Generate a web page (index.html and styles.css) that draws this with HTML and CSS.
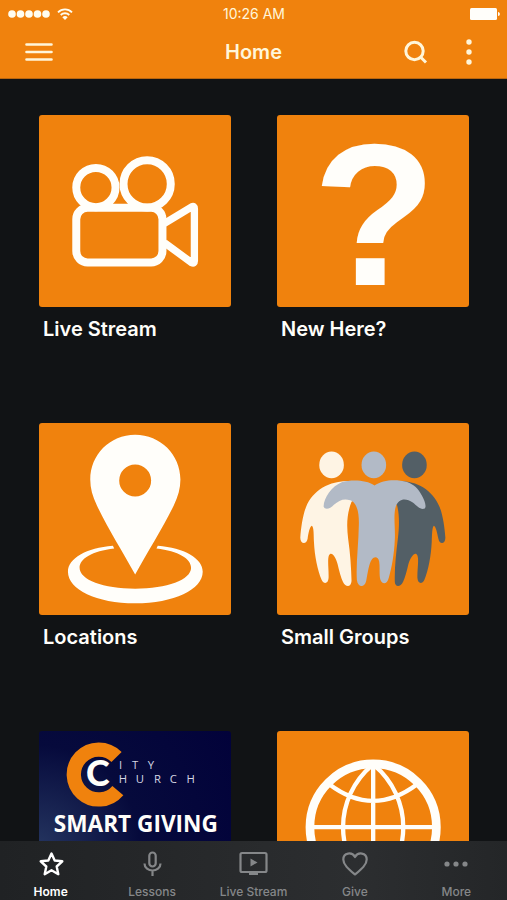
FILE: index.html
```html
<!DOCTYPE html>
<html lang="en">
<head>
<meta charset="utf-8">
<meta name="viewport" content="width=device-width, initial-scale=1">
<title>Home</title>
<link rel="stylesheet" href="styles.css">
</head>
<body>
<div class="app">
  <header class="header">
    <div class="status">
      <div class="status-signal">
        <svg width="42" height="10" viewBox="0 0 42 10" aria-hidden="true"><circle cx="4" cy="5" r="3.8"/><circle cx="12.5" cy="5" r="3.8"/><circle cx="21" cy="5" r="3.8"/><circle cx="29.500" cy="5" r="3.8"/><circle cx="38" cy="5" r="3.8"/></svg>
        <svg width="16" height="12" viewBox="0 0 16 12" aria-hidden="true"><g fill="none" stroke="currentColor" stroke-width="1.8"><path d="M1 4.300a10 10 0 0 1 14 0"/><path d="M3.700 7a6.200 6.200 0 0 1 8.600 0"/></g><path d="M8 12 5.300 9.200a3.900 3.900 0 0 1 5.400 0z"/></svg>
      </div>
      <span class="status-time">10:26 AM</span>
      <svg class="status-battery" width="30" height="12" viewBox="0 0 30 12" aria-hidden="true"><rect width="27" height="12" rx="1.500"/><path d="M28 4c2.500 0 2.500 4 0 4z"/></svg>
    </div>
    <div class="bar">
      <button class="icon-button" type="button" aria-label="Menu">
        <svg width="28" height="20" viewBox="0 0 28 20"><path d="M1.500 2.500h25M1.500 10h25M1.500 17.500h25" stroke="currentColor" stroke-width="2.600" stroke-linecap="round"/></svg>
      </button>
      <h1 class="title">Home</h1>
      <div class="actions">
        <button class="icon-button" type="button" aria-label="Search">
          <svg width="24" height="24" viewBox="0 0 24 24"><g fill="none" stroke="currentColor" stroke-width="3"><circle cx="10.500" cy="11" r="8.700"/><path d="m16.500 17 5.500 5.500"/></g></svg>
        </button>
        <button class="icon-button" type="button" aria-label="Options">
          <svg width="6" height="26" viewBox="0 0 6 26"><circle cx="3" cy="3" r="2.700"/><circle cx="3" cy="13" r="2.700"/><circle cx="3" cy="23" r="2.700"/></svg>
        </button>
      </div>
    </div>
  </header>

  <main class="content">
    <a class="card" href="#live">
      <svg class="tile" viewBox="25 30 577 577" aria-hidden="true">
        <g fill="none" stroke="currentColor" stroke-width="24" stroke-linejoin="round">
          <circle cx="196" cy="248" r="59"/><circle cx="350" cy="237" r="71"/>
          <rect x="137" y="309" width="259" height="164" rx="34"/>
          <path stroke-width="22" d="M402 356 484 306Q492 302 492 312V468Q492 478 484 474L402 414"/>
        </g>
      </svg>
      <span class="label">Live Stream</span>
    </a>
    <a class="card" href="#new">
      <svg class="tile" viewBox="21 30 577 577" aria-hidden="true">
        <text class="question" x="314" y="540" text-anchor="middle">?</text>
      </svg>
      <span class="label">New Here?</span>
    </a>
    <a class="card" href="#locations">
      <svg class="tile" viewBox="25 25 577 577" aria-hidden="true">
        <path fill-rule="evenodd" d="M314 60C238 60 179 120 179 195C179 222 186 246 199 273C230 338 276 412 314 480C352 412 398 338 430 273C443 246 450 222 450 195C450 120 390 60 314 60ZM314 150a48 48 0 1 1 0 96a48 48 0 1 1 0-96Z"/>
        <path d="M247 394C168 400 112 432 112 472C112 525 198 567 314 567S517 525 517 472C517 432 461 400 382 394L378 402C444 410 482 432 482 460C482 496 410 523 314 523S147 496 147 460C147 432 185 410 251 402Z"/>
      </svg>
      <span class="label">Locations</span>
    </a>
    <a class="card" href="#groups">
      <svg class="tile" viewBox="21 25 577 577" aria-hidden="true">
        <g fill="#fef4e4">
          <ellipse cx="185" cy="151" rx="37" ry="40"/>
          <path d="M240 199C180 198 130 224 108 278C98 304 93 340 91 370C91 390 110 391 113 373C116 355 119 337 126 334C132 340 131 360 132 382C134 425 143 468 155 496C162 511 175 508 176 491C177 467 172 437 177 423C184 409 197 426 203 449C208 470 213 490 219 502C228 521 244 518 245 500C244 460 241 415 235 374C230 335 230 300 245 262L256 255Z"/>
        </g>
        <g fill="#535f66">
          <ellipse cx="434" cy="151" rx="37" ry="40"/>
          <path d="M385 199C440 198 488 224 510 278C520 304 525 340 527 370C527 390 509 391 506 373C502 355 499 337 492 334C487 340 487 360 486 382C484 425 476 468 464 496C457 511 444 508 443 491C442 467 448 437 443 423C437 409 423 426 416 449C411 470 406 490 400 502C391 521 374 518 375 500C374 460 379 415 384 374C389 335 389 300 382 273L370 255Z"/>
        </g>
        <g fill="#b2bac6">
          <ellipse cx="312" cy="151" rx="37" ry="40"/>
          <path d="M314 213C290 195 245 195 217 202C185 215 162 248 161 276C165 287 180 284 192 271C207 257 222 251 241 257C260 263 268 291 267 330C266 390 258 447 261 497C264 520 284 521 289 500C294 475 297 448 306 435C314 425 325 427 328 441C331 460 327 480 332 497C339 513 352 509 357 490C366 460 373 420 375 376C377 340 370 301 378 276C386 253 407 249 429 264C441 273 451 286 463 283C472 279 466 260 456 242C446 222 432 209 412 202C380 194 340 194 314 213Z"/>
        </g>
      </svg>
      <span class="label">Small Groups</span>
    </a>
    <a class="card" href="#giving" aria-label="Smart Giving">
      <svg class="tile tile-navy" viewBox="25 35 577 577">
        <path d="M258 113A75 75 0 1 0 262 214" fill="none" stroke="#f0820d" stroke-width="43"/>
        <text class="logo-c" x="202" y="201" text-anchor="middle">C</text>
        <g class="logo-word" text-anchor="middle">
          <text y="149"><tspan x="270">I</tspan><tspan x="314">T</tspan><tspan x="361">Y</tspan></text>
          <text y="192"><tspan x="277">H</tspan><tspan x="328">U</tspan><tspan x="381">R</tspan><tspan x="429">C</tspan><tspan x="481">H</tspan></text>
        </g>
        <text class="giving" x="316" y="340" text-anchor="middle">SMART GIVING</text>
      </svg>
    </a>
    <a class="card" href="#web" aria-label="Website">
      <svg class="tile" viewBox="21 34 577 577" aria-hidden="true">
        <g fill="none" stroke="currentColor" stroke-width="13">
          <circle cx="310" cy="323" r="190" stroke-width="26"/>
          <path d="M310 133V513M120 323H500M308 136C190 235 190 411 308 510M312 136C430 235 430 411 312 510M178 194Q310 294 442 194M178 452Q310 352 442 452"/>
        </g>
      </svg>
    </a>
  </main>

  <nav class="tabs">
    <a class="tab tab-active" href="#home">
      <svg width="28" height="28" viewBox="0 0 28 28" aria-hidden="true"><path d="M14.500 3.500 17.700 10.500 25.300 11.300 19.700 16.500 21.300 24.200 14.500 20.300 7.700 24.200 9.300 16.500 3.700 11.300 11.300 10.500Z" fill="none" stroke="currentColor" stroke-width="2.400" stroke-linejoin="round"/></svg>
      <span>Home</span>
    </a>
    <a class="tab" href="#lessons">
      <svg width="28" height="28" viewBox="0 0 28 28" aria-hidden="true"><g fill="none" stroke="currentColor" stroke-width="2.200"><rect x="11.300" y="2.500" width="6.400" height="14" rx="3.200"/><path d="M6.500 13.500c0 9.300 16 9.300 16 0M14.500 20.500V26"/></g></svg>
      <span>Lessons</span>
    </a>
    <a class="tab" href="#stream">
      <svg width="30" height="28" viewBox="0 0 30 28" aria-hidden="true"><rect x="2.500" y="3" width="26" height="19" rx="1.500" fill="none" stroke="currentColor" stroke-width="2.200"/><path d="M12.500 8.500v8l7-4zM11 22h9v3h-9z"/></svg>
      <span>Live Stream</span>
    </a>
    <a class="tab" href="#give">
      <svg width="28" height="28" viewBox="0 0 28 28" aria-hidden="true"><path d="M14 24.500C8 19.500 2.300 15 2.300 9.500C2.300 2.500 11 1.500 14 7C17 1.500 25.700 2.500 25.700 9.500C25.700 15 20 19.500 14 24.500Z" fill="none" stroke="currentColor" stroke-width="2.200" stroke-linejoin="round"/></svg>
      <span>Give</span>
    </a>
    <a class="tab" href="#more">
      <svg width="28" height="28" viewBox="0 0 28 28" aria-hidden="true"><circle cx="5" cy="14" r="2.600"/><circle cx="14" cy="14" r="2.600"/><circle cx="23" cy="14" r="2.600"/></svg>
      <span>More</span>
    </a>
  </nav>
</div>
</body>
</html>
```
FILE: styles.css
```css
* { box-sizing: border-box; }

body {
  margin: 0;
  background: #111315;
  color: #fffefa;
  font-family: Inter, "Liberation Sans", sans-serif;
}

svg { display: block; fill: currentColor; }
a { color: inherit; text-decoration: none; }

.app {
  display: flex;
  flex-direction: column;
  height: 100vh;
  overflow: hidden;
}

.header {
  flex: none;
  background: #f0820d;
  color: #fff6da;
  border-bottom: 1px solid #b9660f;
}

.status {
  display: grid;
  grid-template-columns: 1fr auto 1fr;
  align-items: center;
  height: 27px;
  padding: 0 7px 0 8px;
}
.status-signal { display: flex; align-items: center; gap: 7px; color: #fffdf0; }
.status-time { font-size: 14px; line-height: 16px; }
.status-battery { justify-self: end; color: #fffefa; }

.bar {
  display: grid;
  grid-template-columns: 1fr auto 1fr;
  align-items: center;
  height: 51px;
  padding: 0 35px 2px 25px;
}
.title {
  margin: 0;
  padding-left: 10px;
  font-size: 20px;
  line-height: 24px;
  font-weight: 600;
}
.actions { display: flex; justify-content: flex-end; align-items: center; gap: 38px; }
.icon-button {
  justify-self: start;
  padding: 0;
  border: 0;
  background: none;
  color: inherit;
}

.content {
  flex: 1;
  min-height: 0;
  overflow: hidden;
  display: grid;
  grid-template-columns: 1fr 1fr;
  align-content: start;
  gap: 80px 46px;
  padding: 36px 38px 0 39px;
}
.card { display: flex; flex-direction: column; gap: 8px; }
.tile {
  width: 100%;
  aspect-ratio: 1;
  border-radius: 3px;
  background: #f0820d;
}
.tile-navy { background: radial-gradient(circle at 0 60%, #24345f, #060a3c 45%, #02023a); }
.label { padding-left: 4px; font-size: 20px; line-height: 28px; font-weight: 600; }

.question { font: bold 610px "Liberation Sans", sans-serif; }
.logo-c { font: 900 108px Lato, sans-serif; }
.logo-word { font: 34px "Open Sans", sans-serif; fill: #d5d7e4; }
.giving { font: bold 68px "Open Sans", sans-serif; }

.tabs {
  flex: none;
  display: grid;
  grid-template-columns: repeat(5, 1fr);
  height: 59px;
  padding-top: 9px;
  background: linear-gradient(90deg, #202224, #2c2e30 70%, #242628);
  color: #858789;
}
.tab {
  display: flex;
  flex-direction: column;
  align-items: center;
  gap: 6px;
  font-size: 12px;
  line-height: 16px;
  font-weight: 500;
}
.tab-active { color: #fff; font-weight: 600; }
```
